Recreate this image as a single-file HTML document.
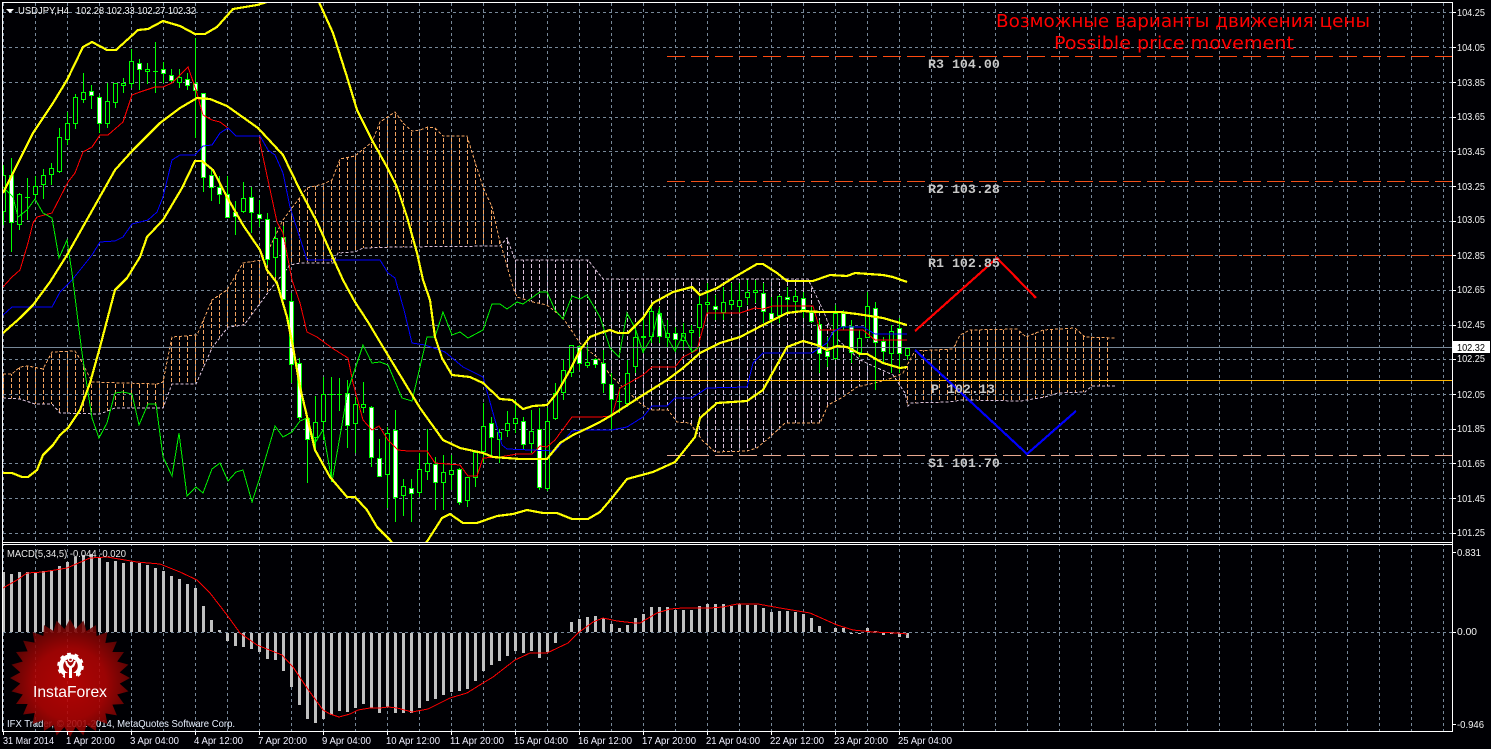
<!DOCTYPE html>
<html><head><meta charset="utf-8"><title>USDJPY,H4</title>
<style>html,body{margin:0;padding:0;background:#000004;width:1491px;height:749px;overflow:hidden}svg{display:block}</style>
</head><body>
<svg xmlns="http://www.w3.org/2000/svg" width="1491" height="749" viewBox="0 0 1491 749">
<defs>
<pattern id="vg" patternUnits="userSpaceOnUse" x="3" y="3" width="32" height="6"><rect width="1" height="3" fill="#778899"/></pattern>
<pattern id="ho" patternUnits="userSpaceOnUse" x="3" y="0" width="8" height="6"><rect width="1" height="4" fill="#f4a460"/></pattern>
<pattern id="ht" patternUnits="userSpaceOnUse" x="3" y="0" width="8" height="6"><rect width="1" height="4" fill="#d8bfd8"/></pattern>
<clipPath id="m"><rect x="3" y="3" width="1449" height="539"/></clipPath>
<clipPath id="d"><rect x="3" y="545" width="1449" height="186"/></clipPath>
<radialGradient id="lg" cx="50%" cy="55%" r="55%"><stop offset="0" stop-color="#c80404"/><stop offset=".55" stop-color="#b00404"/><stop offset="1" stop-color="#5c0404"/></radialGradient>
</defs>
<rect width="1491" height="749" fill="#000004"/>
<rect x="3" y="3" width="1449" height="539" fill="url(#vg)" shape-rendering="crispEdges"/>
<rect x="3" y="545" width="1449" height="186" fill="url(#vg)" shape-rendering="crispEdges"/>
<path d="M3 12.5H1452M3 47.5H1452M3 82.5H1452M3 117.5H1452M3 151.5H1452M3 186.5H1452M3 221.5H1452M3 255.5H1452M3 290.5H1452M3 325.5H1452M3 359.5H1452M3 394.5H1452M3 429.5H1452M3 463.5H1452M3 498.5H1452M3 533.5H1452M3 632.5H1452" stroke="#778899" stroke-dasharray="3 3" fill="none" shape-rendering="crispEdges"/>

<g clip-path="url(#m)">
<polygon fill="url(#ho)" shape-rendering="crispEdges" points="3,374 12,374 20,367 28,366 43,369 52,352 75,351 82,362 92,382 157,384 163,382 172,337 197,335 212,300 227,290 243,263 262,260 267,253 283,220 298,200 307,188 323,184 332,180 340,159 355,156 372,142 380,122 395,112 403,123 412,131 420,130 428,127 435,128 443,136 467,136 475,162 483,187 492,207 499,238 501,245 397,247 363,248 355,252 338,253 333,263 300,263 290,265 270,290 244,325 228,327 212,348 196,384 172,384 163,408 115,408 100,414 60,413 52,404 35,404 20,399 3,398"/>
<polygon fill="url(#ht)" shape-rendering="crispEdges" points="501,245 507,238 515,260 588,260 603,279 808,279 823,310 833,335 860,360 893,377 887,380 857,387 843,397 828,405 820,423 785,423 770,437 757,448 747,451 715,452 702,440 690,423 677,422 668,410 650,410 640,403 610,375 600,360 580,343 563,318 547,305 533,302 517,297 513,287"/>
<polygon fill="url(#ho)" shape-rendering="crispEdges" points="893,377 903,373 911,358 915,351 953,349 960,335 970,330 1017,329 1026,337 1043,330 1075,328 1085,337 1115,338 1115,386 1092,386 1085,392 1058,393 1045,397 1021,401 962,400 949,402 911,403 908,406 905,393"/>
<polyline fill="none" stroke="#f4a460" stroke-dasharray="3 2" shape-rendering="crispEdges" points="3,374 12,374 20,367 28,366 43,369 52,352 75,351 82,362 92,382 157,384 163,382 172,337 197,335 212,300 227,290 243,263 262,260 267,253 283,220 298,200 307,188 323,184 332,180 340,159 355,156 372,142 380,122 395,112 403,123 412,131 420,130 428,127 435,128 443,136 467,136 475,162 483,187 492,207 499,238 513,287 517,297 533,302 547,305 563,318 580,343 600,360 610,375 640,403 650,410 668,410 677,422 690,423 702,440 715,452 747,451 757,448 770,437 785,423 820,423 828,405 843,397 857,387 887,380 903,373 911,358 915,351 953,349 960,335 970,330 1017,329 1026,337 1043,330 1075,328 1085,337 1115,338"/>
<polyline fill="none" stroke="#d8bfd8" stroke-dasharray="3 2" shape-rendering="crispEdges" points="3,398 20,399 35,404 52,404 60,413 100,414 115,408 163,408 172,384 196,384 212,348 228,327 244,325 270,290 290,265 300,263 333,263 338,253 355,252 363,248 397,247 500,246 507,238 515,260 588,260 603,279 808,279 823,310 833,335 860,360 893,375 905,393 908,406 911,403 949,402 962,400 1021,401 1045,397 1058,393 1085,392 1092,386 1115,386"/>

<!-- wicks -->
<path shape-rendering="crispEdges" stroke="#00ff00" fill="none" d="M3.5 165V225M11.5 158V252M19.5 193V230M27.5 178V220M25 197.5h5M35.5 176V199M43.5 169V199M51.5 163V185M59.5 128V173M67.5 112V145M75.5 94V129M83.5 73V103M91.5 85V109M99.5 95V133M107.5 83V128M115.5 83V108M123.5 78V93M131.5 49V88M139.5 59V90M147.5 63V84M155.5 42V93M153 71.5h5M163.5 62V83M171.5 69V82M179.5 69V88M187.5 73V90M195.5 38V138M203.5 93V192M211.5 170V201M219.5 176V204M227.5 176V218M235.5 201V235M243.5 182V213M251.5 187V233M259.5 200V227M267.5 213V265M275.5 227V277M283.5 226V300M291.5 293V383M299.5 358V420M307.5 417V483M315.5 396V453M323.5 377V440M331.5 377V482M329 394.5h5M339.5 378V411M337 394.5h5M347.5 380V448M355.5 397V453M363.5 382V413M371.5 406V467M379.5 439V477M387.5 427V508M395.5 410V522M403.5 479V516M411.5 479V522M419.5 453V497M427.5 429V480M435.5 457V510M443.5 455V510M451.5 455V490M459.5 468V505M467.5 477V507M475.5 453V487M483.5 403V463M491.5 417V456M499.5 429V463M507.5 411V437M515.5 400V433M523.5 417V450M531.5 410V453M539.5 408V490M547.5 408V491M555.5 383V420M563.5 360V400M571.5 345V377M579.5 345V370M587.5 345V368M595.5 358V368M603.5 350V393M611.5 373V430M619.5 387V413M617 401.5h5M627.5 360V407M635.5 328V373M643.5 315V353M651.5 307V343M659.5 307V343M667.5 320V348M675.5 327V352M683.5 323V350M691.5 325V353M699.5 295V337M707.5 283V313M715.5 295V320M723.5 287V320M731.5 283V310M739.5 283V313M747.5 280V305M755.5 280V303M763.5 283V323M771.5 297V323M779.5 295V323M787.5 287V312M795.5 290V313M803.5 292V318M811.5 307V323M819.5 320V373M827.5 337V367M835.5 305V360M843.5 310V330M851.5 320V363M859.5 330V357M867.5 292V338M875.5 302V390M883.5 337V363M891.5 325V373M899.5 318V373M907.5 347V360"/>
<!-- hollow bodies -->
<path shape-rendering="crispEdges" stroke="#00ff00" fill="#000004" d="M1.5 175.5h4v36h-4zM17.5 194.5h4v30h-4zM33.5 186.5h4v8h-4zM41.5 175.5h4v9h-4zM49.5 168.5h4v6h-4zM57.5 137.5h4v34h-4zM65.5 123.5h4v16h-4zM73.5 97.5h4v26h-4zM81.5 92.5h4v7h-4zM105.5 101.5h4v22h-4zM113.5 83.5h4v19h-4zM121.5 83.5h4v2h-4zM129.5 61.5h4v22h-4zM145.5 69.5h4v2h-4zM177.5 77.5h4v5h-4zM241.5 198.5h4v13h-4zM273.5 238.5h4v19h-4zM313.5 422.5h4v15h-4zM321.5 394.5h4v27h-4zM353.5 404.5h4v19h-4zM361.5 404.5h4v3h-4zM385.5 433.5h4v41h-4zM401.5 486.5h4v9h-4zM417.5 469.5h4v23h-4zM425.5 463.5h4v8h-4zM441.5 472.5h4v10h-4zM449.5 470.5h4v4h-4zM465.5 477.5h4v23h-4zM473.5 452.5h4v25h-4zM481.5 426.5h4v25h-4zM497.5 432.5h4v7h-4zM505.5 423.5h4v7h-4zM513.5 418.5h4v5h-4zM529.5 431.5h4v12h-4zM545.5 421.5h4v67h-4zM553.5 393.5h4v25h-4zM561.5 370.5h4v22h-4zM569.5 345.5h4v27h-4zM585.5 362.5h4v3h-4zM625.5 373.5h4v30h-4zM633.5 337.5h4v29h-4zM649.5 311.5h4v25h-4zM665.5 333.5h4v4h-4zM681.5 333.5h4v7h-4zM689.5 330.5h4v2h-4zM697.5 304.5h4v23h-4zM705.5 302.5h4v2h-4zM721.5 302.5h4v10h-4zM729.5 300.5h4v4h-4zM737.5 300.5h4v6h-4zM745.5 292.5h4v5h-4zM753.5 290.5h4v2h-4zM777.5 296.5h4v19h-4zM793.5 296.5h4v5h-4zM833.5 313.5h4v45h-4zM857.5 338.5h4v14h-4zM865.5 306.5h4v31h-4zM889.5 331.5h4v22h-4zM905.5 348.5h4v7h-4z"/>
<!-- filled bodies -->
<path shape-rendering="crispEdges" stroke="#00ff00" fill="#ffffff" d="M9.5 175.5h4v47h-4zM89.5 91.5h4v4h-4zM97.5 97.5h4v26h-4zM137.5 63.5h4v6h-4zM161.5 69.5h4v4h-4zM169.5 75.5h4v5h-4zM185.5 79.5h4v6h-4zM193.5 83.5h4v7h-4zM201.5 93.5h4v84h-4zM209.5 175.5h4v12h-4zM217.5 187.5h4v7h-4zM225.5 194.5h4v23h-4zM233.5 212.5h4v4h-4zM249.5 197.5h4v15h-4zM257.5 214.5h4v4h-4zM265.5 219.5h4v40h-4zM281.5 237.5h4v62h-4zM289.5 301.5h4v63h-4zM297.5 363.5h4v54h-4zM305.5 418.5h4v21h-4zM345.5 393.5h4v32h-4zM369.5 407.5h4v50h-4zM377.5 458.5h4v18h-4zM393.5 430.5h4v67h-4zM409.5 488.5h4v5h-4zM433.5 464.5h4v18h-4zM457.5 469.5h4v33h-4zM489.5 423.5h4v14h-4zM521.5 421.5h4v23h-4zM537.5 429.5h4v58h-4zM577.5 346.5h4v17h-4zM593.5 359.5h4v5h-4zM601.5 363.5h4v20h-4zM609.5 384.5h4v15h-4zM641.5 336.5h4v1h-4zM657.5 313.5h4v23h-4zM673.5 333.5h4v6h-4zM713.5 306.5h4v3h-4zM761.5 293.5h4v18h-4zM769.5 313.5h4v6h-4zM785.5 297.5h4v2h-4zM801.5 298.5h4v11h-4zM809.5 312.5h4v9h-4zM817.5 324.5h4v29h-4zM825.5 351.5h4v5h-4zM841.5 313.5h4v13h-4zM849.5 326.5h4v26h-4zM873.5 308.5h4v34h-4zM881.5 341.5h4v10h-4zM897.5 328.5h4v25h-4z"/>

<!-- pivots, bid -->
<path d="M3 347.5H1452" stroke="#778899" shape-rendering="crispEdges"/>
<path d="M667 56.5H1452" stroke="#ff4a10" stroke-dasharray="18 6" shape-rendering="crispEdges"/>
<path d="M667 181.5H1452" stroke="#f0501a" stroke-dasharray="18 6" shape-rendering="crispEdges"/>
<path d="M667 255.5H1452" stroke="#e05020" stroke-dasharray="18 6" shape-rendering="crispEdges"/>
<path d="M667 455.5H1452" stroke="#e8a890" stroke-dasharray="18 6" shape-rendering="crispEdges"/>
<path d="M667 380.5H1452" stroke="#ffb700" shape-rendering="crispEdges"/>

<!-- tenkan -->
<polyline fill="none" stroke="#ff0000" shape-rendering="crispEdges" points="3,287 12,277 20,270 28,243 33,223 37,217 52,213 68,182 75,173 83,152 92,147 100,135 108,135 123,122 132,95 140,92 155,87 163,87 172,83 180,75 188,67 196,90 203,115 212,120 220,122 228,128 236,136 260,136 260,143 277,222 283,233 292,280 300,303 307,332 317,337 332,348 348,358 353,383 363,420 372,430 379,426 388,440 398,450 408,451 427,451 435,463 460,465 468,476 477,476 483,458 500,457 517,454 532,454 540,446 547,447 555,440 572,417 600,417 612,416 620,388 643,375 652,367 675,367 683,357 697,350 707,313 740,313 755,308 763,309 773,306 813,306 820,330 863,330 875,340 907,340"/>
<!-- kijun -->
<polyline fill="none" stroke="#0000ff" shape-rendering="crispEdges" points="3,315 12,307 52,307 60,292 72,280 92,255 100,242 115,241 123,237 132,224 148,220 157,212 163,197 172,160 180,155 195,155 203,146 212,145 220,133 228,128 236,136 260,136 268,150 275,155 283,173 290,207 307,260 380,260 388,273 395,278 404,310 412,343 425,345 445,352 463,367 483,377 495,420 502,445 507,449 555,451 572,431 583,430 612,430 627,427 643,417 652,406 667,406 675,398 692,398 707,388 747,387 753,363 763,353 812,353 827,343 833,332 842,327 863,327 875,334 907,334"/>
<!-- chikou -->
<polyline fill="none" stroke="#00f000" shape-rendering="crispEdges" points="3,187 13,197 18,217 27,210 35,199 43,213 52,218 59,258 67,240 72,273 82,353 92,418 99,438 107,423 115,393 123,392 132,394 139,425 148,404 156,404 163,457 172,476 179,433 187,496 196,487 203,493 212,469 220,463 228,481 236,472 243,470 252,502 260,477 275,426 283,437 292,432 300,421 307,418 315,443 323,430 332,482 348,390 363,345 372,363 380,362 388,365 402,398 412,401 427,337 435,337 443,312 452,335 460,332 468,338 483,330 492,304 500,304 507,309 517,302 523,304 540,292 547,292 555,310 563,319 572,296 580,299 587,295 600,317 610,348 619,357 627,313 635,328 643,352 652,337 659,310 667,337 675,351 683,335 692,352 699,347"/>
<!-- bollinger -->
<g fill="none" stroke="#ffff00" stroke-width="2.2" stroke-linejoin="round" shape-rendering="crispEdges">
<polyline points="3,193 13,173 33,133 53,103 67,80 83,47 92,42 107,50 116,50 138,30 148,29 163,21 180,26 195,34 205,34 217,27 233,9 257,5 267,2 280,-3 318,0 333,33 347,77 357,110 373,142 387,167 397,187 407,217 417,253 423,280 430,300 435,337 442,358 452,375 470,377 483,383 500,399 512,400 523,409 533,406 547,405 557,393 570,370 580,350 590,337 600,333 610,330 618,333 628,333 643,318 653,303 673,292 692,287 700,295 717,288 733,278 757,264 763,264 777,273 787,281 813,281 830,275 847,276 855,273 883,275 893,277 907,282"/>
<polyline points="3,333 20,318 33,305 50,282 67,255 115,170 133,150 160,123 180,108 197,98 210,99 227,106 258,128 283,155 300,190 317,222 333,258 343,280 355,302 368,322 383,347 400,375 420,408 443,440 460,448 483,453 493,457 520,459 547,459 560,443 573,435 590,427 600,422 612,415 643,395 667,380 683,368 700,353 720,343 740,337 763,325 787,313 803,311 820,312 840,312 857,314 883,318 907,325"/>
<polyline points="3,473 12,473 22,477 28,477 37,470 43,455 53,445 60,435 68,428 80,410 90,383 100,347 115,290 127,278 140,257 147,237 163,220 182,188 195,161 202,161 213,170 227,197 243,225 260,250 267,270 277,283 287,317 293,347 300,387 315,450 330,477 347,497 355,497 367,510 377,527 390,540 396,548"/>
<polyline points="422,548 428,540 442,518 450,514 463,523 477,523 497,516 513,514 527,510 543,513 557,513 572,519 588,519 600,512 612,498 627,479 653,472 675,462 695,437 700,418 717,403 747,401 763,390 787,347 803,341 817,345 827,350 837,346 847,347 860,354 867,354 883,363 900,368 907,367"/>
</g>
<!-- forecast -->
<polyline fill="none" stroke="#ff0000" stroke-width="2.2" shape-rendering="crispEdges" points="915,331 997,258 1036,298"/>
<polyline fill="none" stroke="#0000ff" stroke-width="2.2" shape-rendering="crispEdges" points="915,350 1027,454 1076,411"/>
</g>

<!-- pivot labels -->
<g font-family="'Liberation Mono',monospace" font-size="13.3" font-weight="700" fill="#c8c8c8">
<text x="928" y="68">R3 104.00</text>
<text x="928" y="193">R2 103.28</text>
<text x="928" y="267">R1 102.85</text>
<text x="931" y="393">P 102.13</text>
<text x="928" y="467">S1 101.70</text>
</g>
<g font-family="'DejaVu Sans',sans-serif" font-size="18" fill="#ff0000">
<text x="996" y="27" textLength="374" lengthAdjust="spacingAndGlyphs">Возможные варианты движения цены</text>
<text x="1054" y="49" textLength="240" lengthAdjust="spacingAndGlyphs">Possible price movement</text>
</g>

<!-- MACD -->
<g clip-path="url(#d)">
<path shape-rendering="crispEdges" stroke="#c0c0c0" stroke-width="3" fill="none" d="M3.5 572V632M11.5 574V632M19.5 572V632M27.5 572V632M35.5 573V632M43.5 571V632M51.5 570V632M59.5 566V632M67.5 562V632M75.5 557V632M83.5 555V632M91.5 554V632M99.5 558V632M107.5 562V632M115.5 561V632M123.5 563V632M131.5 562V632M139.5 563V632M147.5 565V632M155.5 568V632M163.5 571V632M171.5 576V632M179.5 579V632M187.5 584V632M195.5 588V632M203.5 606V632M211.5 620V632M219.5 630V632M227.5 633V641M235.5 633V646M243.5 633V647M251.5 633V649M259.5 633V652M267.5 633V659M275.5 633V660M283.5 633V671M291.5 633V687M299.5 633V705M307.5 633V719M315.5 633V723M323.5 633V719M331.5 633V715M339.5 633V711M347.5 633V712M355.5 633V708M363.5 633V704M371.5 633V708M379.5 633V713M387.5 633V707M395.5 633V713M403.5 633V713M411.5 633V713M419.5 633V708M427.5 633V701M435.5 633V699M443.5 633V695M451.5 633V692M459.5 633V691M467.5 633V689M475.5 633V681M483.5 633V671M491.5 633V665M499.5 633V661M507.5 633V656M515.5 633V651M523.5 633V653M531.5 633V651M539.5 633V658M547.5 633V652M555.5 633V643M571.5 622V632M579.5 619V632M587.5 617V632M595.5 616V632M603.5 618V632M611.5 624V632M619.5 628V632M627.5 625V632M635.5 618V632M643.5 614V632M651.5 607V632M659.5 607V632M667.5 607V632M675.5 610V632M683.5 610V632M691.5 610V632M699.5 606V632M707.5 604V632M715.5 604V632M723.5 604V632M731.5 606V632M739.5 604V632M747.5 605V632M755.5 605V632M763.5 608V632M771.5 612V632M779.5 611V632M787.5 611V632M795.5 612V632M803.5 614V632M811.5 618V632M819.5 626V632M835.5 628V632M843.5 628V632M851.5 633V634M859.5 633V634M867.5 628V632M875.5 631V632M883.5 633V635M891.5 633V634M899.5 633V637M907.5 633V638"/>
<polyline fill="none" stroke="#ff0000" shape-rendering="crispEdges" points="3,588 17,580 27,573 43,572 67,568 90,558 107,557 137,562 160,564 180,572 197,580 210,593 227,615 240,633 257,645 282,655 293,667 307,688 323,710 330,714 339,717 350,714 358,710 370,708 380,708 388,707 397,708 412,712 428,709 450,698 467,693 483,683 493,677 515,660 530,653 547,653 568,643 578,633 593,622 603,618 617,621 635,623 640,623 657,613 670,609 683,608 697,608 710,608 723,607 737,604 758,604 780,608 810,613 837,625 853,630 873,632 897,633 907,634"/>
</g>
<text x="7" y="557" font-family="'Liberation Sans',sans-serif" font-size="10.5" fill="#e8e8e8" textLength="119" lengthAdjust="spacingAndGlyphs">MACD(5,34,5) -0.044 -0.020</text>
<text x="7" y="727" font-family="'Liberation Sans',sans-serif" font-size="10.5" fill="#e8f0ff" textLength="228" lengthAdjust="spacingAndGlyphs">IFX Trader, © 2001-2014, MetaQuotes Software Corp.</text>

<!-- logo -->
<g transform="translate(70,678)">
<polygon fill="url(#lg)" fill-opacity=".88" points="0,-59 5.6,-49 13.4,-57.5 16.5,-47 26,-53 26.6,-42 37.4,-46 35.4,-35 46.9,-36.5 42.4,-26 54,-26 47.2,-16.5 58.5,-13.4 49.7,-5.6 60,0 49.7,5.6 58.5,13.4 47.2,16.5 54,26 42.4,26.6 46.9,37.4 35.4,35.4 37.4,46 26.6,42 26,53 16.5,47 13.4,57.5 5.6,49 0,59 -5.6,49 -13.4,57.5 -16.5,47 -26,53 -26.6,42 -37.4,46 -35.4,35 -46.9,36.5 -42.4,26 -54,26 -47.2,16.5 -58.5,13.4 -49.7,5.6 -60,0 -49.7,-5.6 -58.5,-13.4 -47.2,-16.5 -54,-26 -42.4,-26.6 -46.9,-37.4 -35.4,-35.4 -37.4,-46 -26.6,-42 -26,-53 -16.5,-47 -13.4,-57.5 -5.6,-49"/>
</g>
<g>
<circle cx="70.5" cy="666" r="9.5" fill="none" stroke="#fff" stroke-width="4.5"/>
<circle cx="70.5" cy="666" r="12" fill="none" stroke="#fff" stroke-width="2.6" stroke-dasharray="3.8 3.74"/>
<rect x="65" y="673" width="11" height="7" fill="#b60404"/>
<circle cx="70.5" cy="659.5" r="2" fill="none" stroke="#fff" stroke-width="1.4"/>
<path d="M65 661q1 6 4 7v10h3v-10q3-1 4-7l-2 0q-1 4-3.5 5q-2.500-1-3.500-5z" fill="#fff"/>
</g>
<text x="33" y="697" font-family="'Liberation Sans',sans-serif" font-size="16" fill="#fff" textLength="74" lengthAdjust="spacingAndGlyphs">InstaForex</text>

<!-- frames -->
<path shape-rendering="crispEdges" fill="none" stroke="#ffffff" d="M2.5 2.500H1452.500V731.500H2.500ZM2.500 542.500H1452.500M2.500 544.500H1452.500"/>
<path shape-rendering="crispEdges" stroke="#ffffff" d="M3.500 732V735M67.500 732V735M131.500 732V735M195.500 732V735M259.500 732V735M323.500 732V735M387.500 732V735M451.500 732V735M515.500 732V735M579.500 732V735M643.500 732V735M707.500 732V735M771.500 732V735M835.500 732V735M899.500 732V735M1453 12.500h3M1453 47.500h3M1453 82.500h3M1453 117.500h3M1453 151.500h3M1453 186.500h3M1453 221.500h3M1453 255.500h3M1453 290.500h3M1453 325.500h3M1453 359.500h3M1453 394.500h3M1453 429.500h3M1453 463.500h3M1453 498.500h3M1453 533.500h3M1453 552.500h3M1453 632.500h3M1453 724.500h3"/>

<!-- header -->
<polygon points="6,9 14,9 10,13" fill="#fff"/>
<text x="18" y="14" font-family="'Liberation Sans',sans-serif" font-size="10.5" fill="#f4f4f4" textLength="51" lengthAdjust="spacingAndGlyphs">USDJPY,H4</text>
<text x="76" y="14" font-family="'Liberation Sans',sans-serif" font-size="10.5" fill="#f4f4f4" textLength="120" lengthAdjust="spacingAndGlyphs">102.28 102.33 102.27 102.32</text>

<!-- price axis -->
<g font-family="'Liberation Sans',sans-serif" font-size="10.5" fill="#f4f4f4">
<text x="1457" y="16" textLength="28" lengthAdjust="spacingAndGlyphs">104.25</text>
<text x="1457" y="51" textLength="28" lengthAdjust="spacingAndGlyphs">104.05</text>
<text x="1457" y="86" textLength="28" lengthAdjust="spacingAndGlyphs">103.85</text>
<text x="1457" y="120" textLength="28" lengthAdjust="spacingAndGlyphs">103.65</text>
<text x="1457" y="155" textLength="28" lengthAdjust="spacingAndGlyphs">103.45</text>
<text x="1457" y="190" textLength="28" lengthAdjust="spacingAndGlyphs">103.25</text>
<text x="1457" y="223" textLength="28" lengthAdjust="spacingAndGlyphs">103.05</text>
<text x="1457" y="259" textLength="28" lengthAdjust="spacingAndGlyphs">102.85</text>
<text x="1457" y="293" textLength="28" lengthAdjust="spacingAndGlyphs">102.65</text>
<text x="1457" y="328" textLength="28" lengthAdjust="spacingAndGlyphs">102.45</text>
<text x="1457" y="362" textLength="28" lengthAdjust="spacingAndGlyphs">102.25</text>
<text x="1457" y="398" textLength="28" lengthAdjust="spacingAndGlyphs">102.05</text>
<text x="1457" y="432" textLength="28" lengthAdjust="spacingAndGlyphs">101.85</text>
<text x="1457" y="467" textLength="28" lengthAdjust="spacingAndGlyphs">101.65</text>
<text x="1457" y="502" textLength="28" lengthAdjust="spacingAndGlyphs">101.45</text>
<text x="1457" y="536" textLength="28" lengthAdjust="spacingAndGlyphs">101.25</text>
<text x="1457" y="556" textLength="24" lengthAdjust="spacingAndGlyphs">0.831</text>
<text x="1457" y="635" textLength="20" lengthAdjust="spacingAndGlyphs">0.00</text>
<text x="1457" y="728" textLength="27" lengthAdjust="spacingAndGlyphs">-0.946</text>
</g>
<rect x="1453" y="341" width="37" height="12" fill="#fff"/>
<text x="1457" y="351" font-family="'Liberation Sans',sans-serif" font-size="10.5" fill="#000" textLength="28" lengthAdjust="spacingAndGlyphs">102.32</text>

<!-- time axis -->
<g font-family="'Liberation Sans',sans-serif" font-size="10.5" fill="#f0f0ff">
<text x="3" y="744" textLength="51" lengthAdjust="spacingAndGlyphs">31 Mar 2014</text>
<text x="66" y="744" textLength="49" lengthAdjust="spacingAndGlyphs">1 Apr 20:00</text>
<text x="130" y="744" textLength="49" lengthAdjust="spacingAndGlyphs">3 Apr 04:00</text>
<text x="194" y="744" textLength="49" lengthAdjust="spacingAndGlyphs">4 Apr 12:00</text>
<text x="258" y="744" textLength="49" lengthAdjust="spacingAndGlyphs">7 Apr 20:00</text>
<text x="322" y="744" textLength="49" lengthAdjust="spacingAndGlyphs">9 Apr 04:00</text>
<text x="386" y="744" textLength="54" lengthAdjust="spacingAndGlyphs">10 Apr 12:00</text>
<text x="450" y="744" textLength="54" lengthAdjust="spacingAndGlyphs">11 Apr 20:00</text>
<text x="514" y="744" textLength="54" lengthAdjust="spacingAndGlyphs">15 Apr 04:00</text>
<text x="578" y="744" textLength="54" lengthAdjust="spacingAndGlyphs">16 Apr 12:00</text>
<text x="642" y="744" textLength="54" lengthAdjust="spacingAndGlyphs">17 Apr 20:00</text>
<text x="706" y="744" textLength="54" lengthAdjust="spacingAndGlyphs">21 Apr 04:00</text>
<text x="770" y="744" textLength="54" lengthAdjust="spacingAndGlyphs">22 Apr 12:00</text>
<text x="834" y="744" textLength="54" lengthAdjust="spacingAndGlyphs">23 Apr 20:00</text>
<text x="898" y="744" textLength="54" lengthAdjust="spacingAndGlyphs">25 Apr 04:00</text>
</g>
</svg>
</body></html>
